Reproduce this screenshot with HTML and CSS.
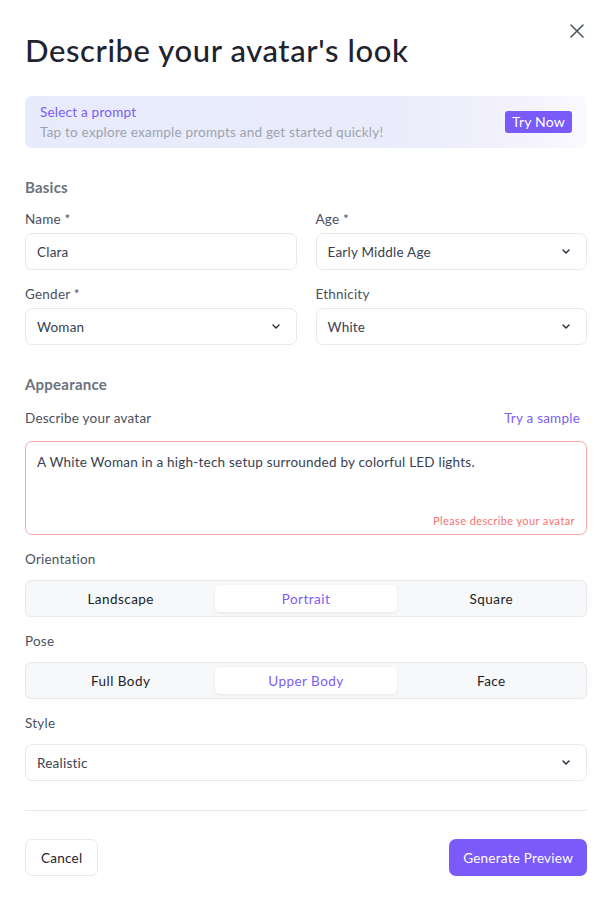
FILE: index.html
```html
<!DOCTYPE html>
<html lang="en">
<head>
<meta charset="utf-8">
<title>Describe your avatar's look</title>
<link rel="stylesheet" href="styles.css">
</head>
<body>
<div class="modal">
  <button class="close" aria-label="Close">
    <svg width="16" height="16" viewBox="0 0 16 16"><path d="M2 2L14 14M14 2L2 14" stroke="#4b5563" stroke-width="1.6" stroke-linecap="round"/></svg>
  </button>
  <h1 class="title">Describe your avatar's look</h1>

  <div class="banner">
    <div class="banner-text">
      <div class="banner-title">Select a prompt</div>
      <div class="banner-sub">Tap to explore example prompts and get started quickly!</div>
    </div>
    <button class="try-now">Try Now</button>
  </div>

  <div class="section-title basics">Basics</div>
  <div class="grid">
    <div class="field">
      <div class="label">Name *</div>
      <div class="input">Clara</div>
    </div>
    <div class="field">
      <div class="label">Age *</div>
      <div class="input select"><span>Early Middle Age</span><svg class="chev" width="8" height="5" viewBox="0 0 8 5"><path d="M1 1L4 4L7 1" fill="none" stroke="#1f2937" stroke-width="1.4" stroke-linecap="round" stroke-linejoin="round"/></svg></div>
    </div>
    <div class="field">
      <div class="label">Gender *</div>
      <div class="input select"><span>Woman</span><svg class="chev" width="8" height="5" viewBox="0 0 8 5"><path d="M1 1L4 4L7 1" fill="none" stroke="#1f2937" stroke-width="1.4" stroke-linecap="round" stroke-linejoin="round"/></svg></div>
    </div>
    <div class="field">
      <div class="label">Ethnicity</div>
      <div class="input select"><span>White</span><svg class="chev" width="8" height="5" viewBox="0 0 8 5"><path d="M1 1L4 4L7 1" fill="none" stroke="#1f2937" stroke-width="1.4" stroke-linecap="round" stroke-linejoin="round"/></svg></div>
    </div>
  </div>

  <div class="section-title appearance">Appearance</div>
  <div class="label-row">
    <div class="label">Describe your avatar</div>
    <a class="sample">Try a sample</a>
  </div>
  <div class="textarea">
    <div class="ta-text">A White Woman in a high-tech setup surrounded by colorful LED lights.</div>
    <div class="ta-error">Please describe your avatar</div>
  </div>

  <div class="label block-label">Orientation</div>
  <div class="segmented">
    <div class="seg">Landscape</div>
    <div class="seg active">Portrait</div>
    <div class="seg">Square</div>
  </div>

  <div class="label block-label">Pose</div>
  <div class="segmented">
    <div class="seg">Full Body</div>
    <div class="seg active">Upper Body</div>
    <div class="seg">Face</div>
  </div>

  <div class="label block-label">Style</div>
  <div class="input select full"><span>Realistic</span><svg class="chev" width="8" height="5" viewBox="0 0 8 5"><path d="M1 1L4 4L7 1" fill="none" stroke="#1f2937" stroke-width="1.4" stroke-linecap="round" stroke-linejoin="round"/></svg></div>

  <div class="divider"></div>

  <div class="footer">
    <button class="btn-cancel">Cancel</button>
    <button class="btn-primary">Generate Preview</button>
  </div>
</div>
</body>
</html>
```

FILE: styles.css
```css
* { box-sizing: border-box; }
html, body { margin: 0; padding: 0; background: #ffffff; }
body {
  font-family: "Lato", "Noto Sans", sans-serif;
  color: #374151;
  letter-spacing: 0.22px;
}
.modal {
  position: relative;
  width: 606px;
  padding: 32px 19px 0 25px;
}
.close {
  position: absolute;
  top: 23px;
  right: 21px;
  width: 16px;
  height: 16px;
  padding: 0;
  border: 0;
  background: none;
  display: flex;
}
.title {
  margin: 0;
  font-size: 31px;
  line-height: 36px;
  font-weight: 500;
  color: #1f2330;
  letter-spacing: 0.6px;
}
.banner {
  margin-top: 28px;
  height: 52px;
  border-radius: 7px;
  padding: 6px 15px;
  background: linear-gradient(90deg, #e7ebfb 0%, #eaecfb 65%, #f3f2fd 88%, #fbfaff 100%);
  display: flex;
  align-items: center;
  justify-content: space-between;
}
.banner-title {
  font-size: 13.5px;
  line-height: 20px;
  color: #7c5cf6;
}
.banner-sub {
  font-size: 13.5px;
  line-height: 20px;
  color: #9ca3af;
}
.try-now {
  font-family: inherit;
  letter-spacing: 0.2px;
  height: 22px;
  padding: 0 7px;
  border: 0;
  border-radius: 3px;
  background: #7a5af8;
  color: #ffffff;
  font-size: 14px;
  line-height: 22px;
}
.section-title {
  font-size: 15px;
  line-height: 20px;
  font-weight: 700;
  color: #6b7280;
}
.basics { margin-top: 29px; }
.appearance { margin-top: 29px; }
.grid {
  margin-top: 12px;
  display: grid;
  grid-template-columns: 1fr 1fr;
  column-gap: 19px;
  row-gap: 14px;
}
.field { display: flex; flex-direction: column; gap: 4px; }
.label {
  font-size: 13.5px;
  line-height: 20px;
  color: #4b5060;
}
.input {
  height: 37px;
  border: 1px solid #e8e9ec;
  border-radius: 7px;
  padding: 0 11px;
  display: flex;
  align-items: center;
  justify-content: space-between;
  font-size: 13.5px;
  color: #374151;
}
.chev { flex: none; margin-right: 5px; }
.label-row {
  margin-top: 14px;
  display: flex;
  justify-content: space-between;
  align-items: center;
}
.sample {
  font-size: 13.5px;
  line-height: 20px;
  color: #7c5cf6;
  margin-right: 7px;
}
.textarea {
  margin-top: 13px;
  height: 94px;
  border: 1px solid #f6a8a8;
  border-radius: 7px;
  padding: 10px 11px 6px;
  display: flex;
  flex-direction: column;
  justify-content: space-between;
}
.ta-text {
  font-size: 13.5px;
  line-height: 20px;
  color: #374151;
}
.ta-error {
  align-self: flex-end;
  font-size: 11px;
  line-height: 14px;
  color: #f87171;
  letter-spacing: 0.4px;
}
.block-label { margin-top: 14px; margin-bottom: 11px; }
.segmented {
  height: 37px;
  border: 1px solid #e8e9ec;
  border-radius: 6px;
  background: #f7f8fa;
  padding: 4px;
  display: grid;
  grid-template-columns: 1fr 1fr 1fr;
  gap: 4px;
}
.seg {
  display: flex;
  align-items: center;
  justify-content: center;
  font-size: 13.5px;
  font-weight: 400;
  color: #1a1d26;
  letter-spacing: 0.45px;
  border-radius: 5px;
}
.seg.active {
  background: #ffffff;
  color: #7c5cf6;
  box-shadow: 0 1px 3px rgba(17, 24, 39, 0.08);
}
.divider {
  margin-top: 29px;
  height: 1px;
  background: #e8e9ec;
}
.footer {
  margin-top: 28px;
  display: flex;
  justify-content: space-between;
}
.btn-cancel, .btn-primary {
  font-family: inherit;
  letter-spacing: 0.25px;
  height: 37px;
  border-radius: 7px;
  font-size: 13.5px;
}
.btn-cancel {
  padding: 0 15px;
  border: 1px solid #e8e9ec;
  background: #ffffff;
  color: #1f2330;
}
.btn-primary {
  padding: 0 14px;
  border: 0;
  background: #7a5af8;
  color: #ffffff;
}
```
